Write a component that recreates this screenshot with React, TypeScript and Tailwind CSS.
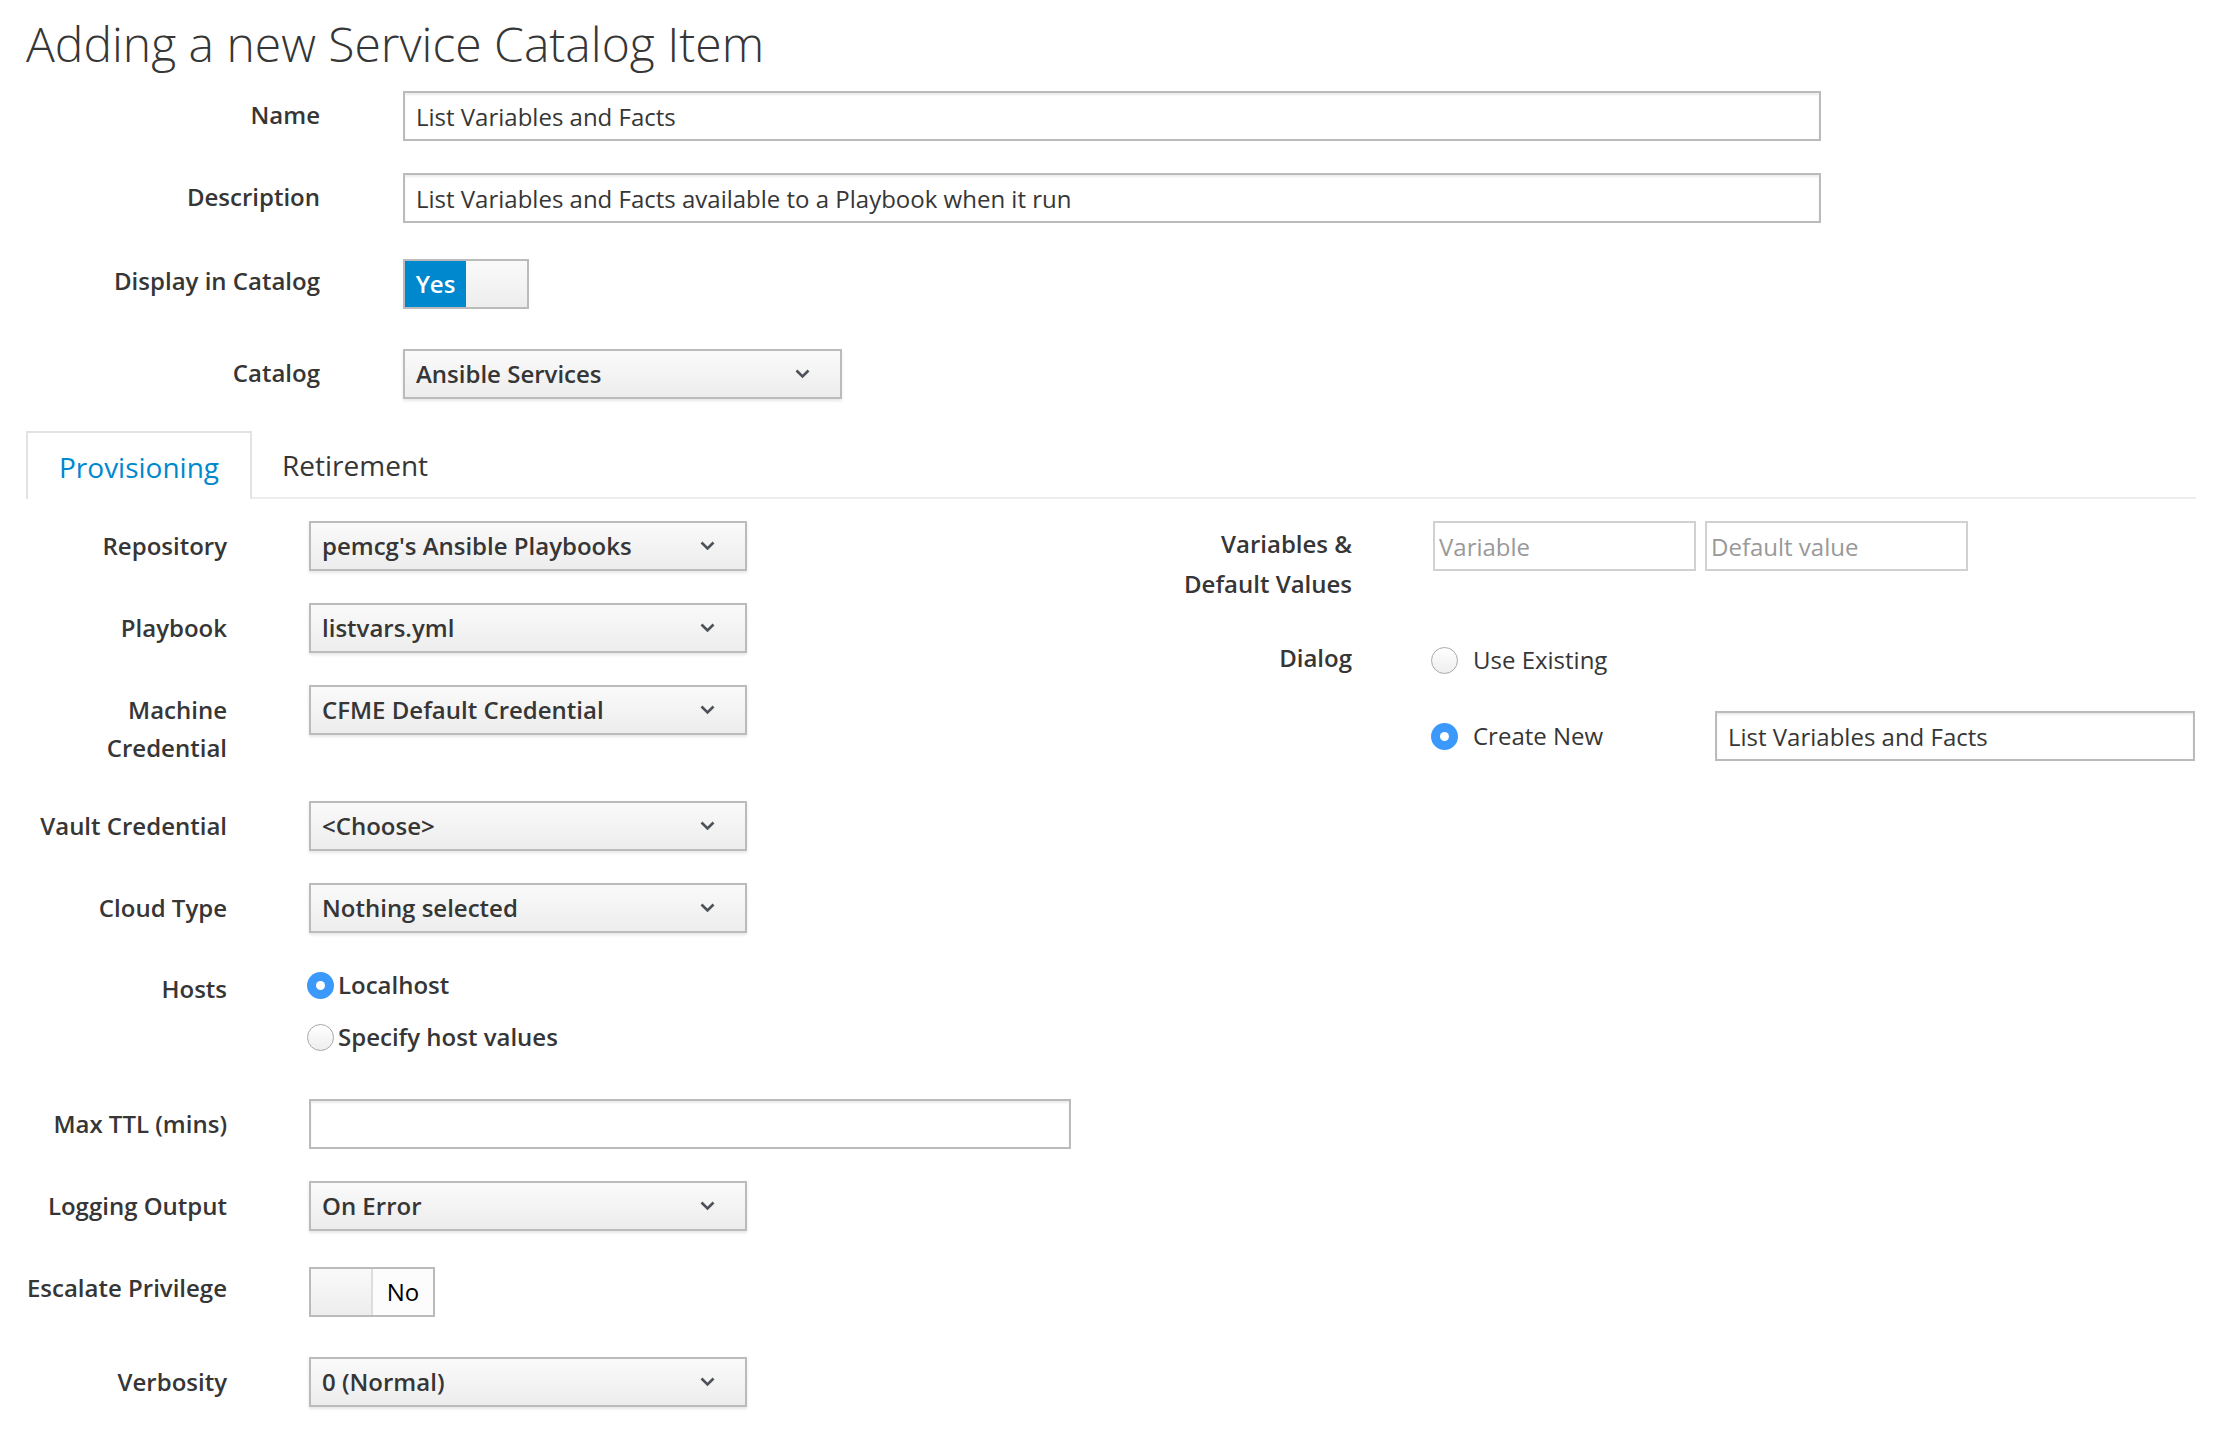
import React from "react";

function Chevron() {
  return (
    <svg width="15" height="10" viewBox="0 0 15 10" className="shrink-0">
      <polyline points="1.5,1.5 7.5,7.5 13.5,1.5" fill="none" stroke="#4d5258" strokeWidth="2.6" />
    </svg>
  );
}

function Select({ value, w = "w-[438px]" }: { value: string; w?: string }) {
  return (
    <div
      className={`flex h-[50px] ${w} items-center justify-between border-2 border-[#bbbbbb] bg-linear-to-b from-[#fafafa] to-[#ededed] pl-[11px] pr-[30px] text-[24px] font-semibold text-[#363636] shadow-[0_2px_3px_rgba(0,0,0,0.10)]`}
    >
      <span className="leading-none">{value}</span>
      <Chevron />
    </div>
  );
}

function TextBox({ value, w, placeholder }: { value?: string; w: string; placeholder?: string }) {
  return (
    <input
      readOnly
      value={value ?? ""}
      placeholder={placeholder}
      className={`h-[50px] ${w} border-2 border-[#bbbbbb] bg-white px-[11px] text-[24px] text-[#363636] shadow-[inset_0_2px_2px_rgba(0,0,0,0.075)] outline-none`}
    />
  );
}

function SmallBox({ placeholder }: { placeholder: string }) {
  return (
    <input
      readOnly
      placeholder={placeholder}
      className="h-[50px] w-[263px] border-2 border-[#d1d1d1] bg-white px-[4px] text-[24px] text-[#363636] placeholder:text-[#999999] outline-none"
    />
  );
}

function Radio({ on }: { on: boolean }) {
  if (on) {
    return (
      <span className="inline-flex h-[27px] w-[27px] shrink-0 items-center justify-center rounded-full bg-[#3b99fc]">
        <span className="h-[9px] w-[9px] rounded-full bg-white" />
      </span>
    );
  }
  return (
    <span className="inline-block h-[27px] w-[27px] shrink-0 rounded-full border border-[#a8a8a8] bg-linear-to-b from-white to-[#eeeeee]" />
  );
}

function TopRow({
  label,
  children,
  mt,
  pb = "pb-[2px]",
}: {
  label: string;
  children: React.ReactNode;
  mt: string;
  pb?: string;
}) {
  return (
    <div className={`flex items-center ${mt}`}>
      <div className={`w-[294px] shrink-0 text-right text-[24px] font-semibold leading-[38px] text-[#363636] ${pb}`}>{label}</div>
      <div className="ml-[83px]">{children}</div>
    </div>
  );
}

function LeftRow({
  label,
  children,
  mt,
  pt = "pt-[6px]",
}: {
  label: React.ReactNode;
  children: React.ReactNode;
  mt: string;
  pt?: string;
}) {
  return (
    <div className={`flex items-start ${mt}`}>
      <div className={`w-[201px] shrink-0 text-right text-[24px] font-semibold leading-[38px] text-[#363636] ${pt}`}>{label}</div>
      <div className="ml-[82px]">{children}</div>
    </div>
  );
}

export default function App() {
  return (
    <div className="min-h-screen bg-white pl-[26px] pr-[22px] font-['Open_Sans','Liberation_Sans',sans-serif] text-[#363636]">
      <h1 className="pt-[20px] text-[48px] font-light leading-[48px] text-[#363636]">Adding a new Service Catalog Item</h1>

      <TopRow label="Name" mt="mt-[23px]">
        <TextBox value="List Variables and Facts" w="w-[1418px]" />
      </TopRow>
      <TopRow label="Description" mt="mt-[32px]">
        <TextBox value="List Variables and Facts available to a Playbook when it run" w="w-[1418px]" />
      </TopRow>
      <TopRow label="Display in Catalog" mt="mt-[36px]" pb="pb-[7px]">
        <div className="flex h-[50px] w-[126px] border-2 border-[#bbbbbb]">
          <div className="flex w-[61px] items-center justify-center bg-[#0088ce] text-[24px] font-semibold text-white">Yes</div>
          <div className="flex-1 bg-linear-to-b from-[#fafafa] to-[#ededed]" />
        </div>
      </TopRow>
      <TopRow label="Catalog" mt="mt-[40px]">
        <Select value="Ansible Services" w="w-[439px]" />
      </TopRow>

      {/* Tabs */}
      <div className="mt-[32px] flex h-[68px] items-stretch border-b-2 border-[#ededed]">
        <div className="-mb-[2px] flex items-center border-2 border-b-0 border-[#e3e3e3] bg-white px-[31px] pt-[2px] text-[28px] text-[#0088ce]">
          Provisioning
        </div>
        <div className="flex items-center px-[30px] pt-[2px] text-[28px] text-[#363636]">Retirement</div>
      </div>

      {/* Tab content */}
      <div className="mt-[22px] flex items-start">
        <div className="w-[1085px] shrink-0">
          <LeftRow label="Repository" mt="mt-0">
            <Select value="pemcg's Ansible Playbooks" />
          </LeftRow>
          <LeftRow label="Playbook" mt="mt-[32px]">
            <Select value="listvars.yml" />
          </LeftRow>
          <LeftRow
            label={
              <>
                Machine
                <br />
                Credential
              </>
            }
            mt="mt-[32px]"
          >
            <Select value="CFME Default Credential" />
          </LeftRow>
          <LeftRow label="Vault Credential" mt="mt-[34px]">
            <Select value="<Choose>" />
          </LeftRow>
          <LeftRow label="Cloud Type" mt="mt-[32px]">
            <Select value="Nothing selected" />
          </LeftRow>
          <LeftRow label="Hosts" mt="mt-[26px]" pt="pt-[11px]">
            <div className="-ml-[2px] flex flex-col">
              <div className="flex h-[52px] items-center gap-[4px] text-[24px] font-semibold">
                <Radio on={true} />
                <span>Localhost</span>
              </div>
              <div className="flex h-[52px] items-center gap-[4px] text-[24px] font-semibold">
                <Radio on={false} />
                <span>Specify host values</span>
              </div>
            </div>
          </LeftRow>
          <LeftRow label="Max TTL (mins)" mt="mt-[36px]">
            <TextBox w="w-[762px]" />
          </LeftRow>
          <LeftRow label="Logging Output" mt="mt-[32px]">
            <Select value="On Error" />
          </LeftRow>
          <LeftRow label="Escalate Privilege" mt="mt-[36px]" pt="pt-[2px]">
            <div className="flex h-[50px] w-[126px] border-2 border-[#bbbbbb]">
              <div className="w-[62px] border-r-2 border-[#dddddd] bg-linear-to-b from-[#fafafa] to-[#ededed]" />
              <div className="flex flex-1 items-center justify-center bg-[#fcfcfc] text-[24px] text-black">No</div>
            </div>
          </LeftRow>
          <LeftRow label="Verbosity" mt="mt-[40px]">
            <Select value="0 (Normal)" />
          </LeftRow>
        </div>

        <div className="flex-1">
          <div className="flex items-start">
            <div className="w-[241px] shrink-0 pt-[3px] text-right text-[24px] font-semibold leading-[40px]">
              Variables &amp;
              <br />
              Default Values
            </div>
            <div className="ml-[81px] flex gap-[9px]">
              <SmallBox placeholder="Variable" />
              <SmallBox placeholder="Default value" />
            </div>
          </div>
          <div className="mt-[30px] flex items-start">
            <div className="w-[241px] shrink-0 pt-[5px] text-right text-[24px] font-semibold leading-[38px]">Dialog</div>
            <div className="ml-[81px] flex flex-col gap-[24px]">
              <div className="-ml-[2px] flex h-[52px] items-center gap-[15px] text-[24px]">
                <Radio on={false} />
                <span>Use Existing</span>
              </div>
              <div className="flex h-[52px] items-center">
                <div className="-ml-[2px] flex w-[284px] items-center gap-[15px] text-[24px]">
                  <Radio on={true} />
                  <span>Create New</span>
                </div>
                <TextBox value="List Variables and Facts" w="w-[480px]" />
              </div>
            </div>
          </div>
        </div>
      </div>
    </div>
  );
}
